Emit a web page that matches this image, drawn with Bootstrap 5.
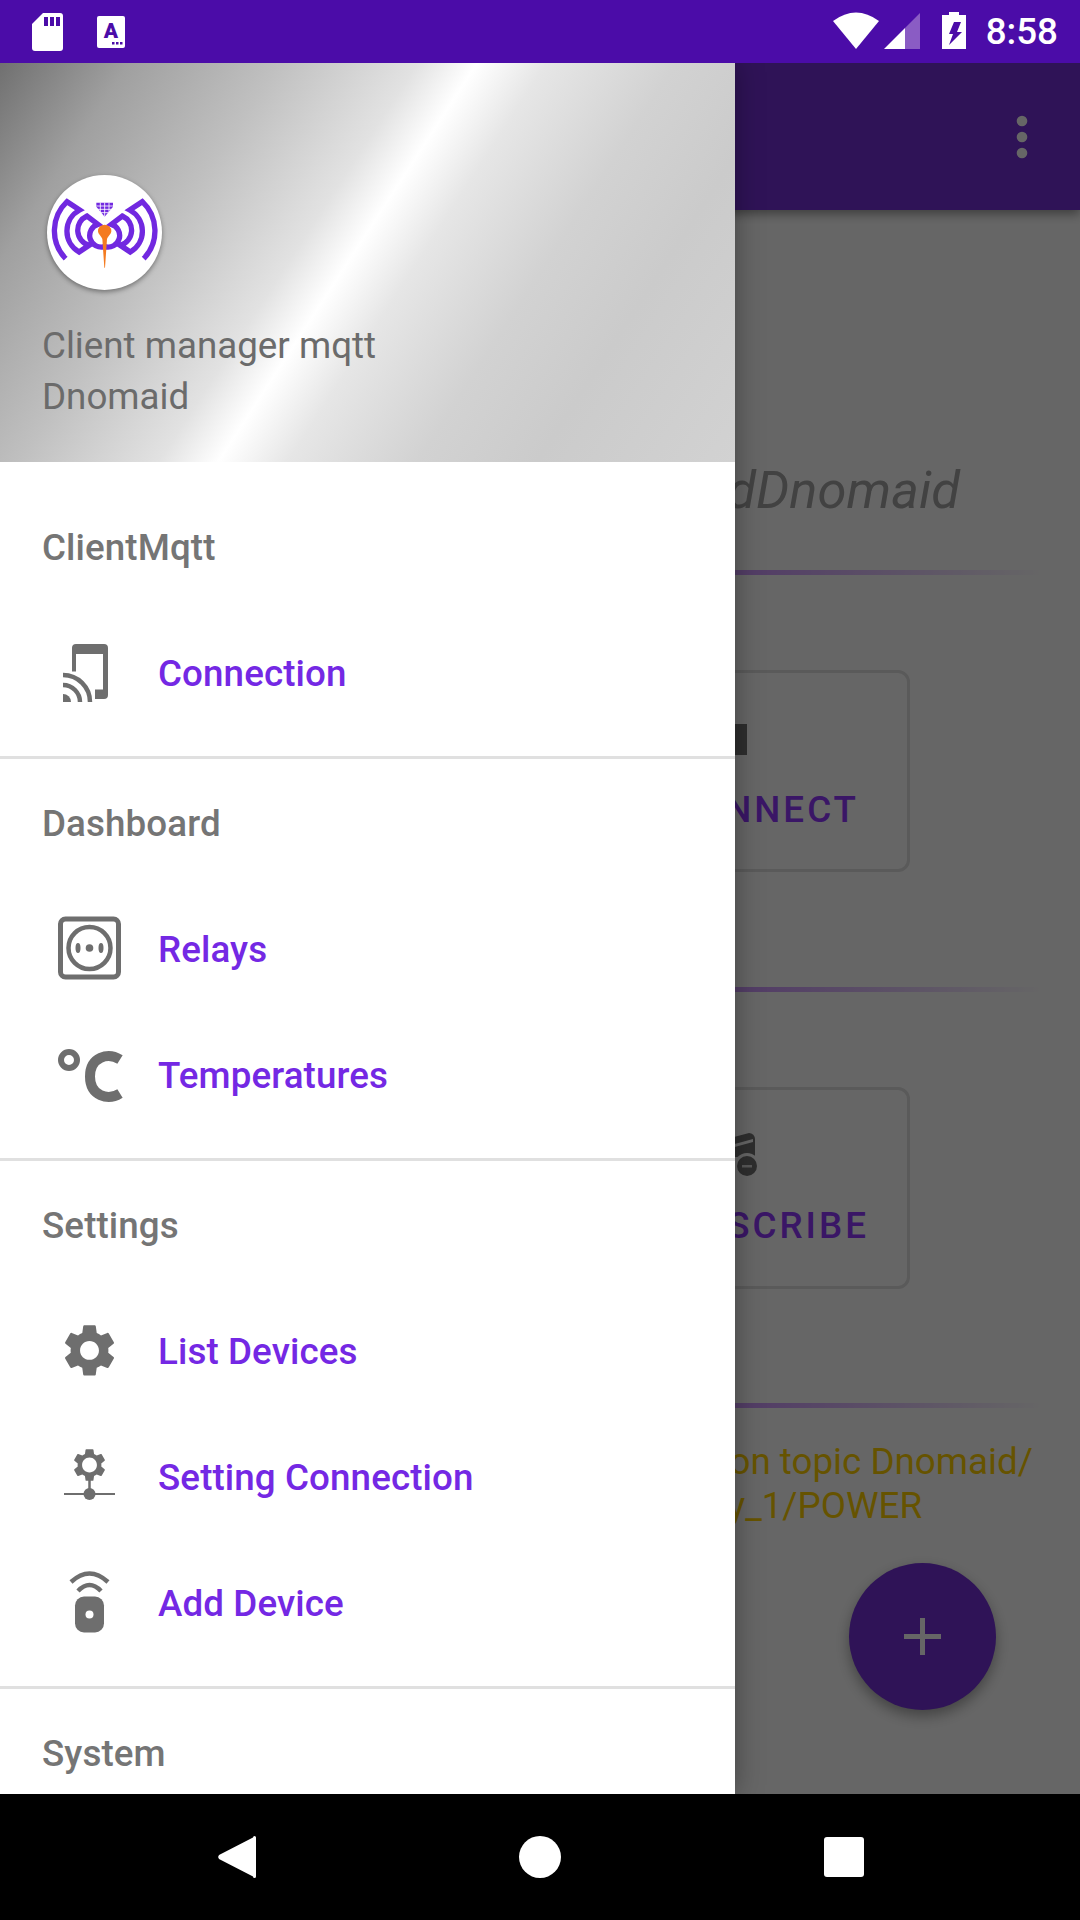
<!DOCTYPE html>
<html lang="en">
<head>
    <meta charset="UTF-8">
    <meta name="viewport" content="width=device-width, initial-scale=1.0">
    <title>Client manager mqtt</title>
    <link href="https://cdn.jsdelivr.net/npm/bootstrap@5.3.0/dist/css/bootstrap.min.css" rel="stylesheet">
    <style>
        body { margin: 0; background: #000; font-family: Roboto, "Liberation Sans", sans-serif; }
        .phone { width: 1080px; height: 1920px; overflow: hidden; }
        .status-bar { height: 63px; background: #4b0ca8; color: #fff; padding: 0 22px 0 32px; flex: none; }
        .status-time { font-size: 36.75px; font-weight: 500; line-height: 63px; margin-left: 20px; }
        .status-a { margin-left: 34px; }
        .screen { flex: 1 1 auto; overflow: hidden; background: #fff; }
        .nav-bar { height: 126px; background: #000; flex: none; }
        .nav-cell { width: 304px; }

        /* app behind the drawer */
        .app-bar { height: 147px; background: #7530d9; padding-right: 50px; box-shadow: 0 4px 10px rgba(0,0,0,.4); }
        .app-title { font-size: 52.5px; font-style: italic; line-height: 62px; color: #a6a6a6; margin: 249px 120px 0 0; text-align: right; }
        .fade-line { height: 5px; margin: 0 37px; background: linear-gradient(90deg, transparent, #d09cff 50%, #d09cff 72%, transparent); }
        .line-one { margin-top: 49px; }
        .line-two { margin-top: 115px; }
        .line-three { margin-top: 114px; }
        .big-btn { width: 306px; height: 202px; margin: 95px 0 0 604px; border: 3px solid #e0e0e0; border-radius: 12px; }
        .big-btn-label { font-size: 36.75px; font-weight: 500; letter-spacing: 3px; line-height: 44px; color: #9137ff; }
        .label-one { margin: 0 48px 0 0; }
        .label-two { margin: 0 38px 0 0; }
        .btn-icon-one { margin: 51px 160px 33px 0; }
        .btn-icon-two { margin: 43px 148px 28px 0; }
        .log-text { font-size: 36.75px; line-height: 44px; color: #ffd000; text-align: center; margin: 32px 0 0 270px; width: 1030px; white-space: nowrap; }
        .fab { width: 147px; height: 147px; right: 84px; bottom: 84px; background: #7530d9; box-shadow: 0 6px 14px rgba(0,0,0,.35); }
        .scrim { inset: 0; background: rgba(0,0,0,.6); }

        /* drawer */
        .drawer { top: 0; left: 0; bottom: 0; width: 735px; background: #fff; box-shadow: 0 0 26px rgba(0,0,0,.35); overflow: hidden; }
        .drawer-head { height: 399px; padding: 112px 0 0 42px; background: linear-gradient(123deg, #707070 0%, #a0a0a0 13%, #c0c0c0 28%, #e2e2e2 42%, #fff 48%, #e6e6e6 55%, #d2d2d2 68%, #cbcbcb 80%, #d2d2d2 100%); }
        .logo-disc { width: 115px; height: 115px; margin-left: 5px; background: #fff; box-shadow: 0 2px 5px rgba(0,0,0,.4); }
        .head-text { margin-top: 30px; font-size: 36.75px; line-height: 51px; color: #6b6b6b; }
        .menu-group { padding: 2px 0 19px; border-bottom: 3px solid #e0e0e0; }
        .menu-group:last-child { border-bottom: 0; }
        .menu-first { padding-top: 23px; }
        .menu-caption { height: 126px; padding-left: 42px; font-size: 36.75px; font-weight: 500; letter-spacing: .1px; color: #757575; }
        .menu-item { height: 126px; padding: 0 0 0 58px; border: 0; background: transparent; font-size: 36.75px; font-weight: 500; letter-spacing: .1px; color: #7428e4; }
        .menu-item svg { margin-right: 37px; flex: none; overflow: visible; }
        .ico { fill: #6e6e6e; }
        .ico-line { fill: none; stroke: #6e6e6e; }
    </style>
</head>
<body>
<div class="phone d-flex flex-column">

    <!-- status bar -->
    <div class="status-bar d-flex align-items-center justify-content-between">
        <div class="d-flex align-items-center">
            <svg width="31" height="38" viewBox="0 0 31 38"><path fill="#fff" d="M11 0H28a3 3 0 0 1 3 3V35a3 3 0 0 1-3 3H3a3 3 0 0 1-3-3V11Z"/><path fill="#4b0ca8" d="M12 4h4v9h-4zM18 4h4v9h-4zM24 4h4v9h-4z"/></svg>
            <svg class="status-a" width="28" height="32" viewBox="0 0 28 32"><rect width="28" height="32" rx="2" fill="#fff"/><text x="14" y="22" text-anchor="middle" font-family="Roboto" font-weight="900" font-size="21" fill="#4b0ca8">A</text><path fill="#4b0ca8" d="M15 26h2.500v2.500H15zM19 26h2.500v2.500H19zM23 26h2.500v2.500H23z"/></svg>
        </div>
        <div class="d-flex align-items-center">
            <svg width="133" height="63" viewBox="834 0 133 63">
                <path fill="#fff" d="M834 21Q857 4 880 21L857 49Z"/>
                <path fill="#8a5cc4" d="M906 49V28L921 13V49Z"/>
                <path fill="#fff" d="M885 49L906 28V49Z"/>
                <path fill="#fff" d="M950 15V12H960V15H967V49H943V15Z"/>
                <path fill="#4b0ca8" d="M955 22H962L958 32H963L950 45L954 34H950Z"/>
            </svg>
            <span class="status-time">8:58</span>
        </div>
    </div>

    <div class="screen position-relative">
        <!-- app content, dimmed by the scrim -->
        <div class="app-bar d-flex align-items-center justify-content-end">
            <svg width="16" height="48" viewBox="0 0 16 48"><circle cx="8" cy="8" r="5.300" fill="#fff"/><circle cx="8" cy="24" r="5.300" fill="#fff"/><circle cx="8" cy="40" r="5.300" fill="#fff"/></svg>
        </div>
        <div class="app-title">ClientMqttdDnomaid</div>
        <div class="fade-line line-one"></div>
        <div class="big-btn d-flex flex-column align-items-end">
            <svg class="btn-icon-one" width="60" height="31" viewBox="0 0 60 31"><rect width="60" height="31" fill="#737373"/></svg>
            <div class="big-btn-label label-one">CONNECT</div>
        </div>
        <div class="fade-line line-two"></div>
        <div class="big-btn d-flex flex-column align-items-end">
            <svg class="btn-icon-two" width="40" height="43" viewBox="0 0 40 43"><path fill="#737373" d="M0 8L30 0a6 6 0 0 1 6 6V24H0Z"/><path fill="#fff" d="M12 12L34 6V9L12 15Z"/><circle cx="28" cy="33" r="13" fill="#fff"/><circle cx="28" cy="33" r="10" fill="#737373"/><rect x="23" y="32" width="10" height="2.500" fill="#ddd"/></svg>
            <div class="big-btn-label label-two">SUBSCRIBE</div>
        </div>
        <div class="fade-line line-three"></div>
        <div class="log-text">Subscribed on topic Dnomaid/<br>&nbsp;Relay_1/POWER</div>
        <div class="fab position-absolute rounded-circle d-flex align-items-center justify-content-center">
            <svg width="37" height="37" viewBox="0 0 37 37"><path fill="#fff" d="M16 0h5v16h16v5H21v16h-5V21H0v-5h16Z"/></svg>
        </div>
        <div class="scrim position-absolute"></div>

        <!-- drawer -->
        <div class="drawer position-absolute">
            <div class="drawer-head">
                <div class="logo-disc rounded-circle">
                    <svg width="115" height="115" viewBox="52 47 345 345">
                        <g fill="none" stroke="#7128e0" stroke-width="16">
                            <path d="M108 298A120 120 0 0 1 112 127L150 152A72 72 0 0 0 148 278L178 258A47 47 0 0 1 172 170L205 195A33 33 0 0 0 225 262"/>
                            <path d="M342 298A120 120 0 0 0 338 127L300 152A72 72 0 0 1 302 278L272 258A47 47 0 0 0 278 170L245 195A33 33 0 0 1 225 262"/>
                        </g>
                        <path fill="#7128e0" d="M200 130H250V142L225 172L200 142Z"/>
                        <path fill="none" stroke="#fff" stroke-width="2.500" d="M200 140H250M205 150H245M214 160H236M212 130V160M225 130V172M238 130V160"/>
                        <path fill="#f47b20" d="M225 196a20 19 0 0 1 20 19c0 9-9 14-13 24L226 325H224L218 239C214 229 205 224 205 215a20 19 0 0 1 20-19Z"/>
                    </svg>
                </div>
                <div class="head-text">Client manager mqtt<br>Dnomaid</div>
            </div>

            <div class="menu-group menu-first">
                <div class="menu-caption d-flex align-items-center">ClientMqtt</div>
                <ul class="list-group list-group-flush">
                    <li class="list-group-item menu-item d-flex align-items-center">
                        <svg width="63" height="63" viewBox="0 1.500 63 63">
                            <path class="ico" d="M18 2.500H46a4 4 0 0 1 4 4V53.500a4 4 0 0 1-4 4H37V48H45V12.500H18V30H14V6.500a4 4 0 0 1 4-4Z"/>
                            <path class="ico-line" stroke-width="4.500" d="M5 33.500A27 27 0 0 1 32 60.500M5 43.500A17 17 0 0 1 22 60.500"/>
                            <path class="ico" d="M5 52.500A8 8 0 0 1 13 60.500H5Z"/>
                        </svg>
                        Connection
                    </li>
                </ul>
            </div>

            <div class="menu-group">
                <div class="menu-caption d-flex align-items-center">Dashboard</div>
                <ul class="list-group list-group-flush">
                    <li class="list-group-item menu-item d-flex align-items-center">
                        <svg width="63" height="63" viewBox="0 2.500 63 63">
                            <rect class="ico-line" x="2.500" y="2.500" width="58" height="58" rx="5" stroke-width="5"/>
                            <circle class="ico-line" cx="31.500" cy="31.500" r="21" stroke-width="4.500"/>
                            <circle class="ico" cx="31.500" cy="31.500" r="3.800"/>
                            <ellipse class="ico" cx="20" cy="31.500" rx="2.500" ry="5"/>
                            <ellipse class="ico" cx="43" cy="31.500" rx="2.500" ry="5"/>
                        </svg>
                        Relays
                    </li>
                    <li class="list-group-item menu-item d-flex align-items-center">
                        <svg width="63" height="63" viewBox="0 0 63 63">
                            <circle class="ico-line" cx="11" cy="15" r="8" stroke-width="6"/>
                            <path class="ico-line" stroke-width="10" d="M62 14.500C50 7 32 12 32 31.500S50 56 62 48.500"/>
                        </svg>
                        Temperatures
                    </li>
                </ul>
            </div>

            <div class="menu-group">
                <div class="menu-caption d-flex align-items-center">Settings</div>
                <ul class="list-group list-group-flush">
                    <li class="list-group-item menu-item d-flex align-items-center">
                        <svg width="63" height="63" viewBox="0 .8 24 24"><path class="ico" d="M19.14 12.94c.04-.3.06-.61.06-.94 0-.32-.02-.64-.07-.94l2.03-1.58c.18-.14.23-.41.12-.61l-1.92-3.32c-.12-.22-.37-.29-.59-.22l-2.39.96c-.5-.38-1.03-.7-1.62-.94l-.36-2.54c-.04-.24-.24-.41-.48-.41h-3.84c-.24 0-.43.17-.47.41l-.36 2.54c-.59.24-1.13.57-1.62.94l-2.39-.96c-.22-.08-.47 0-.59.22L2.74 8.87c-.12.21-.08.47.12.61l2.03 1.58c-.05.3-.09.63-.09.94s.02.64.07.94l-2.03 1.58c-.18.14-.23.41-.12.61l1.92 3.32c.12.22.37.29.59.22l2.39-.96c.5.38 1.03.7 1.62.94l.36 2.54c.05.24.24.41.48.41h3.84c.24 0 .44-.17.47-.41l.36-2.54c.59-.24 1.13-.56 1.62-.94l2.39.96c.22.08.47 0 .59-.22l1.92-3.32c.12-.22.07-.47-.12-.61l-2.01-1.58zM12 15.600c-1.98 0-3.600-1.620-3.600-3.600s1.620-3.600 3.600-3.600 3.600 1.620 3.600 3.600-1.620 3.600-3.600 3.600z"/></svg>
                        List Devices
                    </li>
                    <li class="list-group-item menu-item d-flex align-items-center">
                        <svg width="63" height="63" viewBox="0 1.500 63 63">
                            <path class="ico" transform="translate(31.5 19.5) scale(1.65) translate(-12 -12)" d="M19.14 12.94c.04-.3.06-.61.06-.94 0-.32-.02-.64-.07-.94l2.03-1.58c.18-.14.23-.41.12-.61l-1.92-3.32c-.12-.22-.37-.29-.59-.22l-2.39.96c-.5-.38-1.03-.7-1.62-.94l-.36-2.54c-.04-.24-.24-.41-.48-.41h-3.84c-.24 0-.43.17-.47.41l-.36 2.54c-.59.24-1.13.57-1.62.94l-2.39-.96c-.22-.08-.47 0-.59.22L2.74 8.87c-.12.21-.08.47.12.61l2.03 1.58c-.05.3-.09.63-.09.94s.02.64.07.94l-2.03 1.58c-.18.14-.23.41-.12.61l1.92 3.32c.12.22.37.29.59.22l2.39-.96c.5.38 1.03.7 1.62.94l.36 2.54c.05.24.24.41.48.41h3.84c.24 0 .44-.17.47-.41l.36-2.54c.59-.24 1.13-.56 1.62-.94l2.39.96c.22.08.47 0 .59-.22l1.92-3.32c.12-.22.07-.47-.12-.61l-2.01-1.58zM12 16.500c-2.480 0-4.500-2.020-4.500-4.500s2.020-4.500 4.500-4.500 4.500 2.020 4.500 4.500-2.020 4.500-4.500 4.500z"/>
                            <path class="ico-line" stroke-width="2" d="M6 48.500H57"/>
                            <path class="ico-line" stroke-width="2.500" d="M31.500 34V44"/>
                            <circle class="ico" cx="31.500" cy="48.500" r="6"/>
                        </svg>
                        Setting Connection
                    </li>
                    <li class="list-group-item menu-item d-flex align-items-center">
                        <svg width="63" height="63" viewBox="0 2 63 63">
                            <rect class="ico" x="17" y="25.500" width="29" height="36" rx="9"/>
                            <circle cx="31.500" cy="43.500" r="4" fill="#fff"/>
                            <path class="ico-line" stroke-width="4.500" d="M13 11Q31.500 -6 50 11M20 20Q31.500 8 43 20"/>
                        </svg>
                        Add Device
                    </li>
                </ul>
            </div>

            <div class="menu-group">
                <div class="menu-caption d-flex align-items-center">System</div>
            </div>
        </div>
    </div>

    <!-- navigation bar -->
    <div class="nav-bar d-flex align-items-center justify-content-center">
        <div class="nav-cell d-flex justify-content-center">
            <svg width="42" height="42" viewBox="0 0 42 42"><path fill="#fff" d="M38 1.500a1.500 1.500 0 0 1 3 0V40.500a1.500 1.500 0 0 1-3 0L4 23a3 3 0 0 1 0-4Z"/></svg>
        </div>
        <div class="nav-cell d-flex justify-content-center">
            <svg width="42" height="42" viewBox="0 0 42 42"><circle cx="21" cy="21" r="21" fill="#fff"/></svg>
        </div>
        <div class="nav-cell d-flex justify-content-center">
            <svg width="40" height="40" viewBox="0 0 40 40"><rect width="40" height="40" rx="3" fill="#fff"/></svg>
        </div>
    </div>
</div>
<script src="https://cdn.jsdelivr.net/npm/bootstrap@5.3.0/dist/js/bootstrap.bundle.min.js"></script>
</body>
</html>
